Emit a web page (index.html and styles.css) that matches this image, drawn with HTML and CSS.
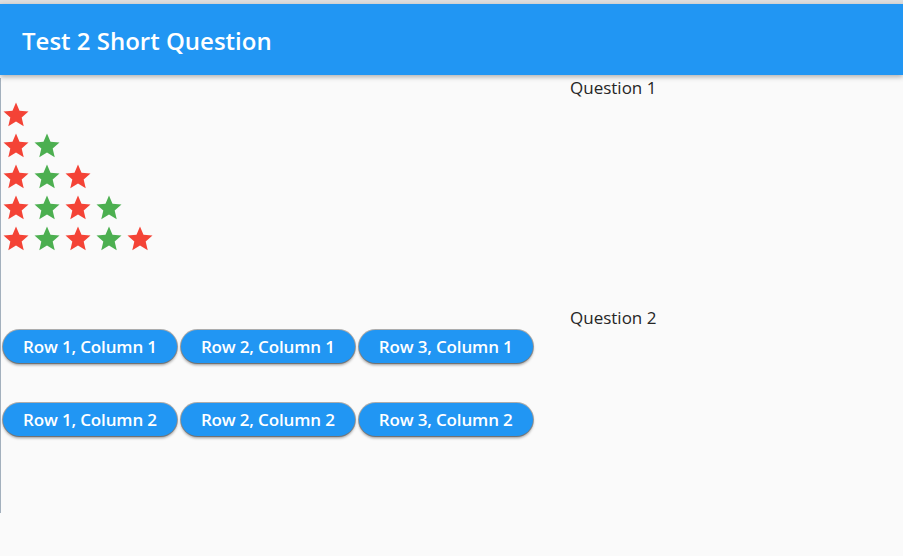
FILE: index.html
```html
<!DOCTYPE html>
<html lang="en">
<head>
<meta charset="utf-8">
<title>Test 2 Short Question</title>
<link rel="stylesheet" href="styles.css">
</head>
<body>
<div class="topline"></div>
<header class="appbar"><h1 class="title">Test 2 Short Question</h1></header>
<main class="content">
  <section class="q1">
    <p class="qlabel">Question 1</p>
    <div class="stars">
      <div class="star-row">
        <svg class="star red" viewBox="0 0 24 24"><path d="M12 17.27L18.18 21l-1.64-7.03L22 9.24l-7.19-.61L12 2 9.19 8.63 2 9.24l5.46 4.73L5.820 21z"/></svg>
      </div>
      <div class="star-row">
        <svg class="star red" viewBox="0 0 24 24"><path d="M12 17.27L18.18 21l-1.64-7.03L22 9.24l-7.19-.61L12 2 9.19 8.63 2 9.24l5.46 4.73L5.82 21z"/></svg>
        <svg class="star green" viewBox="0 0 24 24"><path d="M12 17.27L18.18 21l-1.64-7.03L22 9.24l-7.19-.61L12 2 9.19 8.63 2 9.24l5.46 4.73L5.82 21z"/></svg>
      </div>
      <div class="star-row">
        <svg class="star red" viewBox="0 0 24 24"><path d="M12 17.27L18.18 21l-1.64-7.03L22 9.24l-7.19-.61L12 2 9.19 8.63 2 9.24l5.46 4.73L5.82 21z"/></svg>
        <svg class="star green" viewBox="0 0 24 24"><path d="M12 17.27L18.18 21l-1.64-7.03L22 9.24l-7.19-.61L12 2 9.19 8.63 2 9.24l5.46 4.73L5.82 21z"/></svg>
        <svg class="star red" viewBox="0 0 24 24"><path d="M12 17.27L18.18 21l-1.64-7.03L22 9.24l-7.19-.61L12 2 9.19 8.63 2 9.24l5.46 4.73L5.82 21z"/></svg>
      </div>
      <div class="star-row">
        <svg class="star red" viewBox="0 0 24 24"><path d="M12 17.27L18.18 21l-1.64-7.03L22 9.24l-7.19-.61L12 2 9.19 8.63 2 9.24l5.46 4.73L5.82 21z"/></svg>
        <svg class="star green" viewBox="0 0 24 24"><path d="M12 17.27L18.18 21l-1.64-7.03L22 9.24l-7.19-.61L12 2 9.19 8.63 2 9.24l5.46 4.73L5.82 21z"/></svg>
        <svg class="star red" viewBox="0 0 24 24"><path d="M12 17.27L18.18 21l-1.64-7.03L22 9.24l-7.19-.61L12 2 9.19 8.63 2 9.24l5.46 4.73L5.82 21z"/></svg>
        <svg class="star green" viewBox="0 0 24 24"><path d="M12 17.27L18.18 21l-1.64-7.03L22 9.24l-7.19-.61L12 2 9.19 8.63 2 9.24l5.46 4.73L5.82 21z"/></svg>
      </div>
      <div class="star-row">
        <svg class="star red" viewBox="0 0 24 24"><path d="M12 17.27L18.18 21l-1.64-7.03L22 9.24l-7.19-.61L12 2 9.19 8.63 2 9.24l5.46 4.73L5.82 21z"/></svg>
        <svg class="star green" viewBox="0 0 24 24"><path d="M12 17.27L18.18 21l-1.64-7.03L22 9.24l-7.19-.61L12 2 9.19 8.63 2 9.24l5.46 4.73L5.82 21z"/></svg>
        <svg class="star red" viewBox="0 0 24 24"><path d="M12 17.27L18.18 21l-1.64-7.03L22 9.24l-7.19-.61L12 2 9.19 8.63 2 9.24l5.46 4.73L5.82 21z"/></svg>
        <svg class="star green" viewBox="0 0 24 24"><path d="M12 17.27L18.18 21l-1.64-7.03L22 9.24l-7.19-.61L12 2 9.19 8.63 2 9.24l5.46 4.73L5.82 21z"/></svg>
        <svg class="star red" viewBox="0 0 24 24"><path d="M12 17.27L18.18 21l-1.64-7.03L22 9.24l-7.19-.61L12 2 9.19 8.63 2 9.24l5.46 4.73L5.82 21z"/></svg>
      </div>
    </div>
  </section>
  <section class="q2">
    <p class="qlabel">Question 2</p>
    <div class="btn-row">
      <button class="pill">Row 1, Column 1</button>
      <button class="pill">Row 2, Column 1</button>
      <button class="pill">Row 3, Column 1</button>
    </div>
    <div class="btn-row">
      <button class="pill">Row 1, Column 2</button>
      <button class="pill">Row 2, Column 2</button>
      <button class="pill">Row 3, Column 2</button>
    </div>
  </section>
</main>
</body>
</html>
```
FILE: styles.css
```css
html, body {
  margin: 0;
  padding: 0;
}
body {
  background: #fafafa;
  font-family: "Open Sans", "Noto Sans", sans-serif;
  width: 903px;
  height: 556px;
  overflow: hidden;
}
.topline {
  height: 4px;
  background: #dedede;
}
.appbar {
  position: relative;
  z-index: 1;
  height: 71px;
  box-sizing: border-box;
  padding-top: 2px;
  background: #2196f3;
  display: flex;
  align-items: center;
  padding-left: 22px;
  box-shadow: 0 2px 5px rgba(0, 0, 0, 0.3);
}
.title {
  margin: 0;
  font-size: 24px;
  font-weight: 600;
  color: #ffffff;
}
.content {
  height: 435px;
  border-left: 1px solid #a3b0bd;
  box-sizing: border-box;
}
.qlabel {
  margin: 0;
  padding-left: 569px;
  font-size: 17px;
  line-height: 20px;
  color: #262626;
}
.q1 .qlabel {
  margin-top: 3px;
}
.stars {
  margin-top: 2px;
}
.star-row {
  display: flex;
  height: 31px;
}
.star {
  display: block;
  width: 30px;
  height: 30px;
  margin-right: 1px;
}
.star.red { fill: #f44336; }
.star.green { fill: #4caf50; }
.q2 .qlabel {
  margin-top: 53px;
}
.btn-row {
  display: flex;
  gap: 4px;
  padding-left: 2px;
  margin-top: 2px;
}
.btn-row + .btn-row {
  margin-top: 40px;
}
.pill {
  height: 33px;
  padding: 0 20px;
  border: none;
  border-radius: 17px;
  background: #2196f3;
  color: #ffffff;
  font-family: "Open Sans", "Noto Sans", sans-serif;
  font-size: 17px;
  font-weight: 600;
  letter-spacing: -0.15px;
  box-shadow: 0 0 0 1px rgba(0, 0, 0, 0.3), 0 2px 3px rgba(0, 0, 0, 0.4);
}
```
